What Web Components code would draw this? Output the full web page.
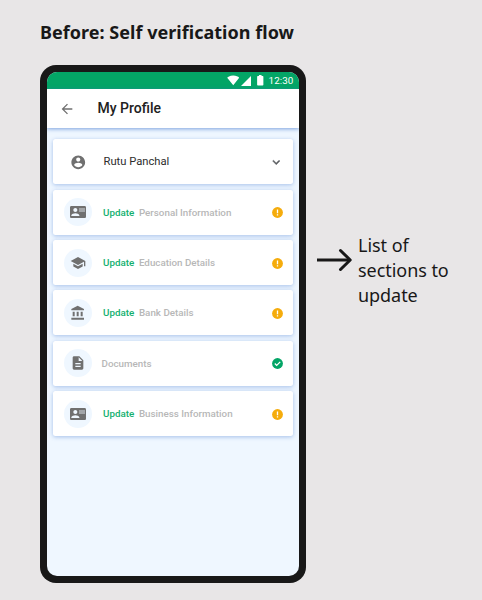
<!DOCTYPE html>
<html lang="en">
<head>
<meta charset="utf-8">
<title>Self verification flow</title>
<style>
html, body { margin: 0; height: 100%; }
body { background: #e8e6e7; overflow: hidden; }
</style>
</head>
<body>
<flow-board></flow-board>
<script>
const ICONS = {
  back: '<path d="M20 11H7.83l5.59-5.59L12 4l-8 8 8 8 1.41-1.41L7.83 13H20v-2z"/>',
  user: '<path d="M12 2C6.48 2 2 6.48 2 12s4.48 10 10 10 10-4.48 10-10S17.52 2 12 2zm0 3c1.66 0 3 1.34 3 3s-1.34 3-3 3-3-1.34-3-3 1.34-3 3-3zm0 14.2c-2.5 0-4.71-1.28-6-3.22.03-1.99 4-3.08 6-3.08 1.99 0 5.97 1.09 6 3.08-1.29 1.94-3.5 3.22-6 3.22z"/>',
  card: '<path d="M22 3H2C.9 3 0 3.9 0 5v14c0 1.1.9 2 2 2h20c1.1 0 1.99-.9 1.99-2L24 5c0-1.100-.9-2-2-2zM8 6c1.660 0 3 1.340 3 3s-1.340 3-3 3-3-1.340-3-3 1.340-3 3-3zm6 12H2v-1c0-2 4-3.100 6-3.100s6 1.100 6 3.100v1zm8-6h-8V6h8v6z"/><path opacity=".6" d="M14 6h8v6h-8z"/>',
  school: '<path d="M5 13.180v4L12 21l7-3.820v-4L12 17l-7-3.820zM12 3L1 9l11 6 9-4.910V17h2V9L12 3z"/>',
  bank: '<path d="M4 10v7h3v-7H4zm6 0v7h3v-7h-3zM2 22h19v-3H2v3zm14-12v7h3v-7h-3zm-4.500-9L2 6v2h19V6l-9.500-5z"/>',
  doc: '<path d="M14 2H6c-1.100 0-1.990.9-1.990 2L4 20c0 1.100.89 2 1.990 2H18c1.100 0 2-.9 2-2V8l-6-6zm2 16H8v-2h8v2zm0-4H8v-2h8v2zm-3-5V3.500L18.500 9H13z"/>',
  chevron: '<path stroke="currentColor" stroke-width=".8" d="M7.410 8.590L12 13.170l4.590-4.580L18 10l-6 6-6-6 1.410-1.410z"/>',
  warn: '<circle cx="12" cy="12" r="10"/><path fill="#fff" d="M10.800 6.500h2.400v6.800h-2.400zM10.800 15h2.400v2.400h-2.400z"/>',
  done: '<circle cx="12" cy="12" r="10"/><path fill="none" stroke="#fff" stroke-width="2.400" d="M7 12l3.500 3.500L17 9"/>',
  wifi: '<path d="M12.010 21.490L23.640 7c-.45-.34-4.930-4-11.640-4C5.280 3 .81 6.660.36 7l11.630 14.490.01.01.01-.01z"/>',
  signal: '<path d="M2 22h20V2z"/>',
  battery: '<path d="M16.500 3.800H14.500V2h-5v1.800H7.500C6.500 3.800 6 4.400 6 5.200v15.400C6 21.400 6.500 22 7.500 22h9c1 0 1.500-.6 1.500-1.400V5.200c0-.8-.5-1.400-1.500-1.400z"/>'
};

customElements.define('ui-icon', class extends HTMLElement {
  constructor() {
    super();
    this.attachShadow({ mode: 'open' });
  }
  connectedCallback() {
    const s = this.getAttribute('size') || 16;
    this.shadowRoot.innerHTML = `<style>:host{display:block;flex:none;width:${s}px;height:${s}px}svg{display:block;fill:currentColor}</style>
      <svg width="${s}" height="${s}" viewBox="0 0 24 24">${ICONS[this.getAttribute('name')]}</svg>`;
  }
});

customElements.define('status-bar', class extends HTMLElement {
  constructor() {
    super();
    this.attachShadow({ mode: 'open' }).innerHTML = `<style>
      :host{display:flex;height:17px;box-sizing:border-box;background:#03a566;color:#fff;align-items:center;justify-content:flex-end;padding-right:5.500px;font:400 9.800px/17px Roboto,sans-serif}
      .w{margin-right:1px}.b{margin:0 2px 0 2px}
      span{letter-spacing:.12px}
      </style><ui-icon class="w" name="wifi" size="12.500"></ui-icon><ui-icon name="signal" size="12"></ui-icon><ui-icon class="b" name="battery" size="12.500"></ui-icon><span><slot></slot></span>`;
  }
});

customElements.define('app-bar', class extends HTMLElement {
  constructor() {
    super();
    this.attachShadow({ mode: 'open' }).innerHTML = `<style>
      :host{display:flex;position:relative;height:39px;box-sizing:border-box;background:#fff;align-items:center;padding-left:11.700px;gap:22.800px;color:#212121;font:500 14px/39px Roboto,sans-serif;box-shadow:0 1px 4px rgba(62,115,205,.65)}
      ui-icon{color:#707070}
      </style><ui-icon name="back" size="16"></ui-icon><span><slot></slot></span>`;
  }
});

customElements.define('profile-card', class extends HTMLElement {
  constructor() {
    super();
    this.attachShadow({ mode: 'open' }).innerHTML = `<style>
      :host{display:flex;height:45px;box-sizing:border-box;background:#fff;border-radius:2.500px;box-shadow:0 1px 4px rgba(62,115,205,.42);align-items:center;padding:0 9.500px 0 17px;color:#2d2d2d;font:400 11.200px/45px Roboto,sans-serif}
      .u{color:#707070;margin-right:17px}
      span{flex:1}
      .c{color:#5c5f62}
      </style><ui-icon class="u" name="user" size="16.500"></ui-icon><span><slot></slot></span><ui-icon class="c" name="chevron" size="14.500"></ui-icon>`;
  }
});

customElements.define('section-card', class extends HTMLElement {
  constructor() {
    super();
    this.attachShadow({ mode: 'open' });
  }
  connectedCallback() {
    const done = this.hasAttribute('done');
    this.shadowRoot.innerHTML = `<style>
      :host{display:flex;height:45px;box-sizing:border-box;background:#fff;border-radius:2.500px;box-shadow:0 1px 4px rgba(62,115,205,.42);align-items:center;padding:0 9.500px 0 11px;font:500 9.800px/45px Roboto,sans-serif;color:#b7b7b7}
      .dot{width:28px;height:28px;border-radius:50%;background:#eff7ff;color:#707070;display:grid;place-items:center;margin-right:${done ? 9.5 : 11}px}
      b{font-weight:500;color:#12b06f;margin-right:4.700px}
      .t{flex:1}
      .s{color:${done ? '#03a566' : '#f5ac0c'};margin-top:1px}
      </style><div class="dot"><ui-icon name="${this.getAttribute('icon')}" size="16"></ui-icon></div>
      ${done ? '' : '<b>Update</b>'}<span class="t"><slot></slot></span><ui-icon class="s" name="${done ? 'done' : 'warn'}" size="13"></ui-icon>`;
  }
});

customElements.define('phone-frame', class extends HTMLElement {
  constructor() {
    super();
    this.attachShadow({ mode: 'open' }).innerHTML = `<style>
      :host{display:block;box-sizing:border-box;width:266px;height:518px;padding:7px;background:#181818;border-radius:16px}
      .screen{height:504px;border-radius:10px;overflow:hidden;background:#eff7ff}
      .list{display:flex;flex-direction:column;gap:5.340px;padding:11.400px 6px}
      </style><div class="screen"><slot name="bar"></slot><div class="list"><slot></slot></div></div>`;
  }
});

customElements.define('flow-note', class extends HTMLElement {
  constructor() {
    super();
    this.attachShadow({ mode: 'open' }).innerHTML = `<style>
      :host{display:flex;gap:6px;color:#181818;font:400 18px/25px "Noto Sans",sans-serif;letter-spacing:-.05px}
      svg{display:block;flex:none;margin-top:14px}
      p{margin:0;width:100px}
      </style><svg width="35" height="26" viewBox="0 0 35 26" fill="none" stroke="#181818" stroke-width="3"><path d="M0 13H33"/><path stroke-linecap="round" stroke-linejoin="round" d="M23.500 3.500L33.200 13l-9.700 9.500"/></svg><p><slot></slot></p>`;
  }
});

customElements.define('flow-board', class extends HTMLElement {
  constructor() {
    super();
    this.attachShadow({ mode: 'open' }).innerHTML = `<style>
      :host{display:block;box-sizing:border-box;width:482px;height:600px;padding:20px 0 0 40px}
      h1{margin:0 0 20px;font:700 18px/25px "Noto Sans",sans-serif;letter-spacing:.03px;color:#181818;white-space:nowrap}
      .row{display:flex;gap:11px}
      flow-note{margin-top:168px}
      </style><h1>Before: Self verification flow</h1>
      <div class="row"><phone-frame>
        <status-bar slot="bar">12:30</status-bar>
        <app-bar slot="bar">My Profile</app-bar>
        <profile-card>Rutu Panchal</profile-card>
        <section-card icon="card">Personal Information</section-card>
        <section-card icon="school">Education Details</section-card>
        <section-card icon="bank">Bank Details</section-card>
        <section-card icon="doc" done>Documents</section-card>
        <section-card icon="card">Business Information</section-card>
      </phone-frame><flow-note>List of sections to update</flow-note></div>`;
  }
});
</script>
</body>
</html>
